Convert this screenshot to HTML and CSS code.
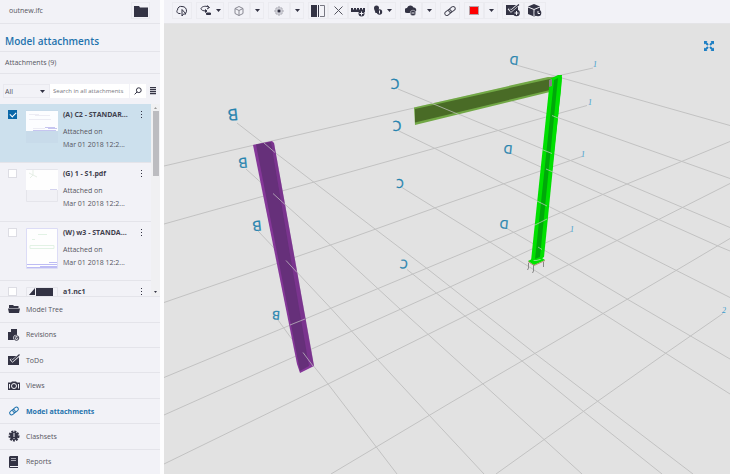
FILE: index.html
```html
<!DOCTYPE html>
<html lang="en">
<head>
    <meta charset="UTF-8">
    <meta name="viewport" content="width=device-width, initial-scale=1.0">
    <title>outnew.ifc</title>
    <link rel="stylesheet" href="styles.css">
</head>
<body>
    <aside class="sidebar">
        <header class="file">
            <span>outnew.ifc</span>
            <button class="file-open" aria-label="Open model">
                <svg width="14" height="12" viewBox="0 0 14 12"><path d="M0 1h5l1 1.500h8V12H0z"/></svg>
            </button>
        </header>
        <h1 class="title">Model attachments</h1>
        <p class="count">Attachments (9)</p>

        <form class="filter">
            <div class="filter-type">
                <select aria-label="Attachment type"><option>All</option></select>
                <svg class="caret" width="5" height="3" viewBox="0 0 5 3"><path d="M0 0h5L2.500 3z"/></svg>
            </div>
            <input class="filter-text" type="text" placeholder="Search in all attachments" aria-label="Search in all attachments">
            <button class="filter-search" type="button" aria-label="Search">
                <svg width="8" height="8" viewBox="0 0 8 8" fill="none" stroke="#333344"><circle cx="4.800" cy="3.200" r="2.400"/><path d="M3 5L.6 7.400"/></svg>
            </button>
            <button class="filter-view" type="button" aria-label="List view">
                <svg width="6" height="8" viewBox="0 0 6 8"><path d="M0 0h6v1.300H0zM0 2h6v1.300H0zM0 4h6v1.300H0zM0 6h6v1.300H0z"/></svg>
            </button>
        </form>

        <div class="list">
            <ul class="attachments">
                <li class="attachment selected">
                    <input type="checkbox" id="att1" checked>
                    <svg class="thumb" width="32" height="33" viewBox="0 0 32 33">
                        <path fill="#c8dbea" d="M0 0h32v33H0z"/><path fill="#fcfdff" d="M0 1h32v20H0z"/>
                        <path stroke="#ececf4" fill="none" d="M3 4.500h10M3 9.500h22M9 5.500h15M7 18.500h12"/>
                        <path stroke="#c6c5f0" fill="none" d="M19 17.500h10M22 18.500h9M7 20.500h23"/>
                    </svg>
                    <label class="info" for="att1"><b>(A) C2 - STANDAR...</b><span>Attached on</span><span>Mar 01 2018 12:2...</span></label>
                    <button class="more" aria-label="More"></button>
                </li>
                <li class="attachment">
                    <input type="checkbox" id="att2">
                    <svg class="thumb" width="32" height="33" viewBox="0 0 32 33">
                        <path fill="#f1f1f6" stroke="#e5e5eb" d="M.5.500h31v32H.5z"/><path fill="#fefefe" d="M0 1h32v20H0z"/>
                        <path stroke="#e6efe6" fill="none" d="M7 1v5l-3 3M7 6l4 2M3 4l4 2"/><path stroke="#d4d3ee" d="M24 20.500h7"/>
                    </svg>
                    <label class="info" for="att2"><b>(G) 1 - S1.pdf</b><span>Attached on</span><span>Mar 01 2018 12:2...</span></label>
                    <button class="more" aria-label="More"></button>
                </li>
                <li class="attachment">
                    <input type="checkbox" id="att3">
                    <svg class="thumb" width="32" height="41" viewBox="0 0 32 41">
                        <path fill="#fefefe" stroke="#dcdcf6" d="M.5.500h31v40H.5z"/>
                        <path stroke="#e2f2e5" fill="none" d="M12 6.500h9M4 12.500M4 17.500h24v3H4zM6 11.500h3"/>
                        <path stroke="#bdbcf4" fill="none" d="M1 36.500h30M1 39.500h30M23 34.500h8M14 38.500h17"/>
                    </svg>
                    <label class="info" for="att3"><b>(W) w3 - STANDA...</b><span>Attached on</span><span>Mar 01 2018 12:2...</span></label>
                    <button class="more" aria-label="More"></button>
                </li>
                <li class="attachment">
                    <input type="checkbox" id="att4">
                    <svg class="thumb" width="32" height="33" viewBox="0 0 32 33">
                        <path fill="#f3f3f8" stroke="#e5e5eb" d="M.5.500h31v32H.5z"/><path fill="#333344" d="M3 8l6-7v7zM10 1h17v9H10z"/>
                    </svg>
                    <label class="info" for="att4"><b>a1.nc1</b></label>
                    <button class="more" aria-label="More"></button>
                </li>
            </ul>
            <div class="scrollbar">
                <svg width="3" height="2" viewBox="0 0 3 2"><path fill="#999999" d="M0 2h3L1.500 0z"/></svg>
                <div class="scrollbar-thumb"></div>
                <svg width="3" height="2" viewBox="0 0 3 2"><path d="M0 0h3L1.500 2z"/></svg>
            </div>
        </div>

        <nav class="menu">
            <a href="#tree">
                <svg width="12" height="12" viewBox="0 0 12 12"><path d="M1 2h4l1 1h4.500v2H1zM0 5.500h12L11 10H1z"/></svg>
                Model Tree
            </a>
            <a href="#revisions">
                <svg width="12" height="12" viewBox="0 0 12 12"><path d="M3 0h6v6a3 3 0 0 0-3 5H0V3h3z"/><circle cx="8.500" cy="9" r="2.300" fill="none" stroke="#333344"/><path fill="none" stroke="#333344" d="M8 8v1.500l2-1"/></svg>
                Revisions
            </a>
            <a href="#todo">
                <svg width="12" height="12" viewBox="0 0 12 12"><path d="M0 2h11v9H0z"/><path fill="none" stroke="#f2f2f7" stroke-width="2.400" d="M2.500 5l2 2L11.500 1"/><path fill="none" stroke="#333344" stroke-width="1.200" d="M3 4.500l1.500 2.500L11.500.500"/></svg>
                ToDo
            </a>
            <a href="#views">
                <svg width="12" height="12" viewBox="0 0 12 12"><path d="M0 2.500h3L4 1.500h4l1 1h3V10H0z"/><circle cx="6" cy="6" r="2.500" fill="none" stroke="#f2f2f7"/><path fill="none" stroke="#f2f2f7" d="M1.500 4v4.500M10.500 4v4.500"/></svg>
                Views
            </a>
            <a href="#attachments" class="active">
                <svg width="12" height="12" viewBox="0 0 12 12" fill="none" stroke="#1f72ad"><g transform="rotate(-38 6 6)"><rect x="1" y="4" width="6" height="4" rx="2"/><rect x="5" y="4" width="6" height="4" rx="2"/></g></svg>
                Model attachments
            </a>
            <a href="#clashsets">
                <svg width="12" height="12" viewBox="0 0 12 12"><circle cx="6" cy="6" r="4"/><circle cx="6" cy="6" r="4.500" fill="none" stroke="#333344" stroke-width="2" stroke-dasharray="2 1"/><path fill="#f2f2f7" d="M5.500 3h1v4h-1zM5.500 8h1v1h-1z"/></svg>
                Clashsets
            </a>
            <a href="#reports">
                <svg width="12" height="12" viewBox="0 0 12 12"><path d="M2 0h8v10H2v1h8v1H2a1 1 0 0 1-1-1V1z"/><path stroke="#a9a9b3" d="M3 2.500h5M3 4.500h5"/></svg>
                Reports
            </a>
        </nav>
    </aside>

    <main class="viewer">
        <div class="toolbar">
            <div class="group">
                <button aria-label="Lasso"><svg width="12" height="12" viewBox="0 0 12 12" fill="none" stroke="#333344"><path d="M4.500 8.500H3C.5 8 .5 6 1.500 5 1.500 2 4 1 6 1.500c3 0 4.500 2 4.500 4.500 0 1-.5 2-1.500 2.500"/><path d="M6 4.500v6.500l1.500-2H10z"/></svg></button>
            </div>
            <div class="group">
                <button class="menu-tool" aria-label="Rotate">
                    <svg width="12" height="12" viewBox="0 0 12 12" fill="none" stroke="#333344"><path d="M9 2.500C7 .5 2 1 1 3.500 1 5 3 6 6 6M7 .5l2.500 2L7 4"/><path fill="#333344" d="M6.500 8h4v1.500h-4zM5 4.500L7 6 5 7.500"/></svg>
                    <svg class="caret" width="5" height="3" viewBox="0 0 5 3"><path d="M0 0h5L2.500 3z"/></svg>
                </button>
            </div>
            <div class="group">
                <button class="wide" aria-label="View cube"><svg width="10" height="10" viewBox="0 0 10 10" fill="none" stroke="#888892"><path d="M5 .5l4 2v5l-4 2-4-2v-5zM1 2.500l4 2 4-2M5 4.500v5"/></svg></button>
                <button class="drop" aria-label="View options"><svg class="caret" width="5" height="3" viewBox="0 0 5 3"><path d="M0 0h5L2.500 3z"/></svg></button>
            </div>
            <div class="group">
                <button class="wide" aria-label="Focus"><svg width="10" height="10" viewBox="0 0 10 10"><path fill="none" stroke="#a9a9b2" d="M2 2h6v6H2zM5 0v2M5 8v2M0 5h2M8 5h2"/><path d="M3.500 3.500h3v3h-3z"/></svg></button>
                <button class="drop" aria-label="Focus options"><svg class="caret" width="5" height="3" viewBox="0 0 5 3"><path d="M0 0h5L2.500 3z"/></svg></button>
            </div>
            <div class="group">
                <button aria-label="Compare"><svg width="14" height="12" viewBox="0 0 14 12"><path d="M0 0h6v12H0zM7 0h1v12H7z"/><path fill="none" stroke="#777782" d="M9 .5h4.500v11H9"/></svg></button>
                <button aria-label="Clear"><svg width="9" height="9" viewBox="0 0 9 9" fill="none" stroke="#555560"><path d="M.5.500l8 8M8.500.500l-8 8"/></svg></button>
                <button aria-label="Measure"><svg width="14" height="12" viewBox="0 0 14 12"><path d="M0 3h14v4H0z"/><path stroke="#f2f2f7" d="M2.500 2v2.500M5.500 2v2.500M8.500 2v2.500M11.500 2v2.500"/><circle cx="10.500" cy="8.500" r="3"/><path stroke="#f2f2f7" d="M8.500 8.500h4M10.500 6.500v4"/></svg></button>
                <button class="menu-tool" aria-label="Markup">
                    <svg width="10" height="12" viewBox="0 0 10 12"><path d="M1 3a2.500 2.500 0 0 1 5 0c0 2-1 2.500-1.500 5h-2C2 5.500 1 5 1 3z"/><circle cx="6.500" cy="7" r="2.700"/><path stroke="#f2f2f7" d="M6.500 5.500v3"/></svg>
                    <svg class="caret" width="5" height="3" viewBox="0 0 5 3"><path d="M0 0h5L2.500 3z"/></svg>
                </button>
            </div>
            <div class="group">
                <button class="wide" aria-label="Cloud"><svg width="12" height="12" viewBox="0 0 12 12"><path d="M2 8a2.500 2.500 0 0 1 0-5 3.500 3.500 0 0 1 6.500-.5A2.500 2.500 0 0 1 11 6L9 8z"/><circle cx="8" cy="8" r="2.800" stroke="#f2f2f7" stroke-width=".5"/><path stroke="#f2f2f7" d="M6.500 8h3"/></svg></button>
                <button class="drop" aria-label="Cloud options"><svg class="caret" width="5" height="3" viewBox="0 0 5 3"><path d="M0 0h5L2.500 3z"/></svg></button>
            </div>
            <div class="group">
                <button aria-label="Link"><svg width="12" height="12" viewBox="0 0 12 12" fill="none" stroke="#444452"><g transform="rotate(-38 6 6)"><rect x="0" y="4" width="7" height="4" rx="2"/><rect x="5" y="4" width="7" height="4" rx="2"/></g></svg></button>
            </div>
            <div class="group">
                <button aria-label="Colour"><span class="swatch"></span></button>
                <button class="drop" aria-label="Colour options"><svg class="caret" width="5" height="3" viewBox="0 0 5 3"><path d="M0 0h5L2.500 3z"/></svg></button>
            </div>
            <div class="group">
                <button class="wide" aria-label="Add ToDo"><svg width="14" height="13" viewBox="0 0 14 13"><path d="M0 1h12v10H0z"/><path fill="none" stroke="#f2f2f7" stroke-width="2.400" d="M2.500 4.500L5 7l7.500-6.500"/><path fill="none" stroke="#333344" stroke-width="1.200" d="M3 4l2 3L13 .5"/><circle cx="10.500" cy="9" r="3.300"/><path stroke="#f2f2f7" d="M8.500 9h4M10.500 7v4"/></svg></button>
                <button class="wide" aria-label="Model history"><svg width="14" height="13" viewBox="0 0 14 13"><path d="M6 0l6 2.500V10L6 12.500 0 10V2.500z"/><path fill="none" stroke="#f2f2f7" d="M0 3l6 2.500L12 3M6 5.500V12"/><circle cx="10" cy="9" r="3.300"/><path fill="none" stroke="#f2f2f7" d="M10 7v2.500h2"/></svg></button>
            </div>
        </div>

        <div class="scene">
            <svg class="model" viewBox="164 24 566 450" preserveAspectRatio="xMidYMid slice">
                <!-- grid, rising to the right -->
                <g class="grid">
                    <path d="M164 166L414 108 593 68"/>
                    <path d="M164 224L450 144 587 105.500"/>
                    <path d="M164 302.500L345 240 450 202.500 582 156.500"/>
                    <path d="M164 377.500L305 319 450 258.500 547 218.500 627 184 730 141.500"/>
                    <path d="M164 415L352 331 450 287 532 249 571 231.500"/>
                    <path d="M164 464L328 384 450 323.500 544 277 617 240.500 730 183.500"/>
                    <path d="M331 474L450 403 522 361 603 313.500 676 270.500 730 238.500"/>
                    <path d="M496 474L598 401 666 353 723 313.500"/>
                </g>
                <!-- grid, falling to the right -->
                <g class="grid">
                    <path d="M237 123L275 152.500 375 229 427 268.500 535 353.500 693 474"/>
                    <path d="M246 169L273 193.500 336 250 400 309 483 384 582 474"/>
                    <path d="M258 231L286 260.500 331 308.500 377 359 429 415 484 474"/>
                    <path d="M278 320L290 336.500 328 384 397 474"/>
                    <path d="M398 89L497 130 627 184 730 227.500"/>
                    <path d="M399 131L435 148.500 504 184 617 240.500 730 297.500"/>
                    <path d="M402 187.500L489 241.500 603 313.500 730 394"/>
                    <path d="M407 269.500L465 316 522 361 583 411 662 474"/>
                    <path d="M516 65L730 125.500"/>
                    <path d="M512 101L552 115.500 682 161.500 730 178.500"/>
                    <path d="M511 153.500L542 167.500 603 194.500 718 246 730 251"/>
                    <path d="M507 228.500L568 264 627 299 730 359"/>
                </g>
                <!-- purple column -->
                <path fill="#853799" d="M253 145L272 141 274 143 314 366 300 373 297 364z"/>
                <path fill="#66307a" d="M256 144.500L271 142 309 366 300 371z"/>
                <path fill="#66307a" d="M271 142L274 143 314 365 308 365z" opacity=".35"/>
                <!-- green beam -->
                <path fill="#72a846" d="M414 107.500L548 77 554 77 554 91 415 125z"/>
                <path fill="#496b26" d="M415 109L550 79 550 90 415 122.500z"/>
                <!-- bright column -->
                <path fill="#00e000" d="M550 79L556 76 558 75 562 75 561 90 542 259 531 261z"/>
                <path fill="#00a80a" d="M554 80L558 78 540 257 535 259z"/>
                <path fill="#00e000" d="M559 77L562 77 544 257 541 259z"/>
                <path fill="#8a7c86" d="M549 80L552 79 552 86 549 87z"/>
                <path fill="#00e500" d="M528 261L532 259 534 261 540 260 542 258 545 260 534 265z"/>
                <path fill="none" stroke="#a96b45" stroke-width=".7" d="M528 261.500L534 265.500 545 260.500"/>
                <path fill="none" stroke="#888888" d="M528.500 263v5l-1 2M533.500 265v6l-1 2M543.500 262v5"/>
                <!-- grid seen through the members -->
                <g class="grid front">
                    <path d="M264 143L275 152.500M273 193.500L285 204.500M286 260.500L297 272.500M290 325L305 319M303 352.500L313 366"/>
                    <path d="M430 102.500L460 115M552 115.500L558 118M542 149.500L552 153.500M546 169L553 172M537 201L547 206M534 225.500L547 219M538 247L542 249.500"/>
                </g>
                <!-- axis labels are seen from behind -->
                <g class="axis">
                    <text class="axis-near" transform="translate(233 115) rotate(174)" y="6">B</text>
                    <text class="axis-mid" transform="translate(243 163) rotate(174)" y="5">B</text>
                    <text class="axis-mid" transform="translate(257 226) rotate(174)" y="5">B</text>
                    <text class="axis-far" transform="translate(276 315) rotate(184)" y="4">B</text>
                    <text class="axis-mid" transform="translate(395 84) rotate(178)" y="5">C</text>
                    <text class="axis-mid" transform="translate(397 126) rotate(178)" y="5">C</text>
                    <text class="axis-far" transform="translate(400 183) rotate(180)" y="4">C</text>
                    <text class="axis-far" transform="translate(404 264) rotate(188)" y="4">C</text>
                    <text class="axis-far" transform="translate(514 60) rotate(186)" y="4">D</text>
                    <text class="axis-far" transform="translate(508 149) rotate(186)" y="4">D</text>
                    <text class="axis-far" transform="translate(504 224) rotate(186)" y="4">D</text>
                </g>
                <g class="axis axis-small">
                    <text x="595" y="67">1</text>
                    <text x="590" y="105">1</text>
                    <text x="583" y="157">1</text>
                    <text x="572" y="232">1</text>
                    <text x="724" y="313">2</text>
                </g>
            </svg>
            <button class="fullscreen" aria-label="Full screen">
                <svg width="10" height="10" viewBox="0 0 10 10"><path d="M0 0h3.500L0 3.500zM10 0v3.500L6.500 0zM0 10V6.500L3.500 10zM10 10H6.500L10 6.500z"/><path stroke="#1d7fc4" stroke-width="2" d="M1 1l3 3M9 1L6 4M1 9l3-3M9 9L6 6"/></svg>
            </button>
        </div>
    </main>
</body>
</html>
```
FILE: styles.css
```css
* {
    box-sizing: border-box;
}

body {
    display: flex;
    height: 100vh;
    margin: 0;
    overflow: hidden;
    background-color: #fdfdfe;
    color: #555560;
    font-family: "Open Sans", "Noto Sans", sans-serif;
    font-size: 7px;
}

button, input, select {
    margin: 0;
    padding: 0;
    border: 0;
    background: none;
    color: inherit;
    font: inherit;
}

button {
    display: flex;
    align-items: center;
    justify-content: center;
}

svg {
    display: block;
    flex: none;
    fill: #333344;
}

svg[fill="none"] {
    fill: none;
}

/* sidebar */
.sidebar {
    display: flex;
    flex-direction: column;
    flex: 0 0 160px;
    min-width: 0;
    background-color: #f2f2f7;
}

.file, .title, .count {
    display: flex;
    align-items: center;
    flex: none;
    margin: 0;
    border-bottom: 1px solid #e4e4ea;
}

.file {
    justify-content: space-between;
    height: 24px;
    padding: 0 10px 2px 9px;
}

.file-open {
    width: 19px;
    height: 17px;
    border: 1px solid #e9e9ef;
}

.title {
    height: 28px;
    padding-top: 6px;
    padding-left: 5px;
    color: #1f72ad;
    font-size: 10px;
    font-weight: 600;
}

.count {
    height: 22px;
    padding-left: 5px;
}

.filter {
    display: flex;
    align-items: center;
    flex: none;
    height: 30px;
    padding: 4px 0 0 3px;
}

.filter > * {
    height: 14px;
}

.filter-type {
    display: flex;
    align-items: center;
    flex: 0 0 47px;
    padding: 0 4px 0 1px;
    border: 1px solid #e9e9ef;
}

.filter-type select {
    flex: 1;
    appearance: none;
}

.filter-text {
    flex: 1;
    min-width: 0;
    padding-left: 3px;
    background-color: #ffffff;
    font-size: 6px;
}

.filter-text::placeholder {
    color: #777780;
}

.filter-search {
    width: 16px;
    margin-left: 1px;
    background-color: #ffffff;
}

.filter-view {
    width: 14px;
}

.list {
    display: flex;
    flex: 1;
    min-height: 0;
    overflow: hidden;
}

.attachments {
    flex: 1;
    min-width: 0;
    margin: 0;
    padding: 0;
    list-style: none;
}

.attachment {
    display: flex;
    align-items: flex-start;
    height: 59px;
    padding: 6px 7px 0 8px;
    border-bottom: 1px solid #e4e4ea;
}

.attachment.selected {
    background-color: #cce0ed;
}

.attachment input {
    flex: none;
    width: 9px;
    height: 9px;
    margin-right: 9px;
    border: 1px solid #dddde4;
    background-color: #ffffff;
    appearance: none;
}

.attachment input:checked {
    border-color: #0967a8;
    background-color: #0967a8;
}

.attachment input:checked::after {
    display: block;
    width: 5px;
    height: 3px;
    margin: 1px;
    border-bottom: 1px solid #ffffff;
    border-left: 1px solid #ffffff;
    content: "";
    transform: rotate(-45deg);
}

.info {
    display: flex;
    flex-direction: column;
    flex: 1;
    min-width: 0;
    margin-left: 5px;
    line-height: 13px;
    white-space: nowrap;
}

.info b {
    margin-bottom: 5px;
    color: #40404d;
    line-height: 10px;
}

.more {
    width: 6px;
    height: 9px;
    background: radial-gradient(circle, #333344 1px, transparent 1px) center / 3px 3px repeat-y;
}

.scrollbar {
    display: flex;
    flex-direction: column;
    align-items: center;
    flex: 0 0 9px;
    padding: 3px 1px;
    background-color: #f0f0f2;
}

.scrollbar-thumb {
    flex: 0 0 35%;
    width: 6px;
    margin: 2px 0 auto;
    background-color: #bcbcc0;
}

.menu {
    display: grid;
    grid-auto-rows: 1fr;
    flex: none;
    height: 37.5vh;
}

.menu a {
    display: flex;
    align-items: center;
    gap: 6px;
    padding-left: 8px;
    border-top: 1px solid #e4e4ea;
    color: inherit;
    text-decoration: none;
}

.menu .active {
    color: #1f72ad;
    font-weight: 700;
}

/* viewer */
.viewer {
    display: flex;
    flex-direction: column;
    flex: 1;
    min-width: 0;
    margin-left: 4px;
}

.toolbar {
    display: flex;
    gap: 4px;
    flex: none;
    height: 24px;
    padding: 2px 8px 4px;
    border-bottom: 1px solid #e4e4e7;
    background-color: #f2f2f7;
}

.group {
    display: flex;
}

.group button {
    width: 20px;
    border: 1px solid #ebebf0;
}

.group .wide {
    width: 22px;
}

.group .drop {
    width: 14px;
}

.group .menu-tool {
    gap: 4px;
    width: 28px;
}

.swatch {
    width: 10px;
    height: 9px;
    border: 1px solid #b9a0a6;
    background-color: #ff0000;
}

.scene {
    position: relative;
    flex: 1;
    min-height: 0;
    background-color: #e2e2e2;
}

.model {
    width: 100%;
    height: 100%;
}

.grid {
    fill: none;
    stroke: #c2c2c2;
}

.front {
    stroke: #c8c8c8;
    opacity: 0.7;
}

.axis {
    fill: #2583ae;
    font-family: "Liberation Sans Narrow", "Open Sans", sans-serif;
    stroke: #2583ae;
    stroke-width: 0.3px;
    text-anchor: middle;
}

.axis-near {
    font-size: 16px;
}

.axis-mid {
    font-size: 14px;
}

.axis-far {
    font-size: 12px;
}

.axis-small {
    fill: #3d9bcc;
    font-family: "Liberation Serif", serif;
    font-size: 8px;
    font-style: italic;
    stroke: none;
}

.fullscreen {
    position: absolute;
    top: 17px;
    right: 16px;
}

.fullscreen svg {
    fill: #1d7fc4;
}
```
